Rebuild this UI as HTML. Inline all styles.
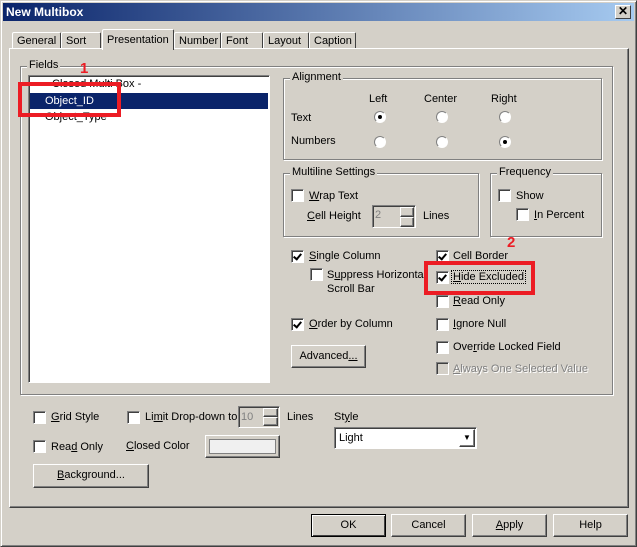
<!DOCTYPE html>
<html><head><style>
*{box-sizing:border-box;margin:0;padding:0}
body{width:637px;height:547px;background:#d4d0c8;font-family:"Liberation Sans",sans-serif;font-size:11px;color:#000;position:relative;overflow:hidden}
.a{position:absolute;white-space:nowrap}
.win{position:absolute;left:0;top:0;width:637px;height:547px;border:1px solid;border-color:#d4d0c8 #404040 #404040 #d4d0c8;box-shadow:inset 1px 1px #fff,inset -1px -1px #808080}
.title{position:absolute;left:3px;top:3px;width:631px;height:18px;background:linear-gradient(90deg,#0a246a,#a6caf0);color:#fff;font-weight:bold;font-size:12px;padding:2px 3px}
.close{position:absolute;left:615px;top:5px;width:16px;height:14px;background:#d4d0c8;border:1px solid;border-color:#fff #404040 #404040 #fff;font-size:12px;line-height:11px;text-align:center;font-weight:bold}
.tab{position:absolute;top:32px;height:17px;border:1px solid;border-color:#fff #404040 transparent #fff;border-bottom:none;padding:2px 4px;border-radius:2px 2px 0 0}
.panel{position:absolute;left:9px;top:48px;width:620px;height:460px;border:1px solid;border-color:#fff #404040 #404040 #fff;box-shadow:inset -1px -1px #808080}
.grp{position:absolute;border:1px solid #808080;box-shadow:1px 1px #fff,inset 1px 1px #fff}
.grp>span{position:absolute;top:-8px;left:6px;background:#d4d0c8;padding:0 2px}
.cb{position:absolute;width:13px;height:13px;background:#fff;border:1px solid;border-color:#808080 #fff #fff #808080;box-shadow:inset 1px 1px #404040}
.cb.k::after{content:"";position:absolute;left:3px;top:1px;width:3px;height:6px;border:solid #000;border-width:0 2px 2px 0;transform:rotate(40deg)}
.cb.d{background:#d4d0c8}
.cb.d::after{border-color:#808080}
.rb{position:absolute;width:12px;height:12px;border-radius:50%;background:#fff;border:1px solid;border-color:#808080 #fff #fff #808080}
.rb.on::after{content:"";position:absolute;left:3px;top:3px;width:4px;height:4px;border-radius:50%;background:#000}
.btn{position:absolute;border:1px solid;border-color:#fff #404040 #404040 #fff;box-shadow:inset -1px -1px #808080;text-align:center;line-height:20px}
.sunk{position:absolute;border:1px solid;border-color:#808080 #fff #fff #808080;box-shadow:inset 1px 1px #404040}
.red{position:absolute;border:4px solid #ec1c24}
.rn{position:absolute;color:#ec1c24;font-weight:bold;font-size:15px}
.gr{color:#808080}
u{text-decoration:underline}
</style></head><body>
<div class="win"></div>
<div class="title">New Multibox</div>
<div class="close">✕</div>

<div class="tab" style="left:12px;width:49px">General</div>
<div class="tab" style="left:61px;width:40px">Sort</div>
<div class="tab" style="left:174px;width:47px">Number</div>
<div class="tab" style="left:221px;width:42px">Font</div>
<div class="tab" style="left:263px;width:46px">Layout</div>
<div class="tab" style="left:309px;width:47px">Caption</div>
<div class="panel"></div>
<div class="tab" style="left:102px;top:29px;width:72px;height:21px;background:#d4d0c8;z-index:2;padding-top:4px">Presentation</div>

<div class="grp" style="left:20px;top:66px;width:593px;height:329px"><span>Fields</span></div>
<div class="sunk" style="left:28px;top:75px;width:242px;height:308px;background:#fff"></div>
<div class="a" style="left:52px;top:78px">Closed Multi Box -</div>
<div class="a" style="left:30px;top:93px;width:238px;height:16px;background:#0a246a"></div>
<div class="a" style="left:45px;top:95px;color:#fff">Object_ID</div>
<div class="a" style="left:45px;top:111px">Object_Type</div>

<div class="grp" style="left:283px;top:78px;width:319px;height:82px"><span>Alignment</span></div>
<div class="a" style="left:369px;top:93px">Left</div>
<div class="a" style="left:424px;top:93px">Center</div>
<div class="a" style="left:491px;top:93px">Right</div>
<div class="a" style="left:291px;top:112px">Text</div>
<div class="a" style="left:291px;top:135px">Numbers</div>
<div class="rb on" style="left:374px;top:111px"></div>
<div class="rb" style="left:436px;top:111px"></div>
<div class="rb" style="left:499px;top:111px"></div>
<div class="rb" style="left:374px;top:136px"></div>
<div class="rb" style="left:436px;top:136px"></div>
<div class="rb on" style="left:499px;top:136px"></div>

<div class="grp" style="left:283px;top:173px;width:196px;height:64px"><span>Multiline Settings</span></div>
<div class="cb" style="left:291px;top:189px"></div><div class="a" style="left:309px;top:190px"><u>W</u>rap Text</div>
<div class="a" style="left:307px;top:210px"><u>C</u>ell Height</div>
<div class="sunk" style="left:372px;top:205px;width:44px;height:23px"></div>
<div class="a gr" style="left:375px;top:209px">2</div>
<div class="btn" style="left:400px;top:207px;width:14px;height:10px"></div>
<div class="btn" style="left:400px;top:217px;width:14px;height:10px"></div>
<div class="a" style="left:423px;top:210px">Lines</div>

<div class="grp" style="left:490px;top:173px;width:112px;height:64px"><span>Frequency</span></div>
<div class="cb" style="left:498px;top:189px"></div><div class="a" style="left:516px;top:190px">Show</div>
<div class="cb" style="left:516px;top:208px"></div><div class="a" style="left:534px;top:209px"><u>I</u>n Percent</div>

<div class="cb k" style="left:291px;top:250px"></div><div class="a" style="left:309px;top:250px"><u>S</u>ingle Column</div>
<div class="cb" style="left:310px;top:268px"></div><div class="a" style="left:327px;top:268px;line-height:14px">S<u>u</u>ppress Horizontal<br>Scroll Bar</div>
<div class="cb k" style="left:291px;top:318px"></div><div class="a" style="left:309px;top:318px"><u>O</u>rder by Column</div>
<div class="btn" style="left:291px;top:345px;width:75px;height:23px">Advanced<u>...</u></div>

<div class="cb k" style="left:436px;top:250px"></div><div class="a" style="left:453px;top:250px">Cell Border</div>
<div class="cb k" style="left:436px;top:271px"></div><div class="a" style="left:451px;top:270px;border:1px dotted #000;padding:0 1px"><u>H</u>ide Excluded</div>
<div class="cb" style="left:436px;top:295px"></div><div class="a" style="left:453px;top:295px"><u>R</u>ead Only</div>
<div class="cb" style="left:436px;top:318px"></div><div class="a" style="left:453px;top:318px"><u>I</u>gnore Null</div>
<div class="cb" style="left:436px;top:341px"></div><div class="a" style="left:453px;top:341px">Ove<u>r</u>ride Locked Field</div>
<div class="cb d" style="left:436px;top:362px"></div><div class="a gr" style="left:453px;top:363px;text-shadow:1px 1px #fff"><u>A</u>lways One Selected Value</div>

<div class="red" style="left:18px;top:82px;width:103px;height:35px"></div>
<div class="rn" style="left:80px;top:60px">1</div>
<div class="red" style="left:424px;top:261px;width:111px;height:34px"></div>
<div class="rn" style="left:507px;top:234px">2</div>

<div class="cb" style="left:33px;top:411px"></div><div class="a" style="left:51px;top:411px"><u>G</u>rid Style</div>
<div class="cb" style="left:127px;top:411px"></div><div class="a" style="left:145px;top:411px">Li<u>m</u>it Drop-down to</div>
<div class="sunk" style="left:238px;top:406px;width:42px;height:22px"></div>
<div class="a gr" style="left:241px;top:411px">10</div>
<div class="btn" style="left:263px;top:408px;width:15px;height:9px"></div>
<div class="btn" style="left:263px;top:417px;width:15px;height:9px"></div>
<div class="a" style="left:287px;top:411px">Lines</div>
<div class="a" style="left:334px;top:411px">St<u>y</u>le</div>
<div class="sunk" style="left:334px;top:427px;width:143px;height:22px;background:#fff"></div>
<div class="a" style="left:339px;top:432px">Light</div>
<div class="btn" style="left:459px;top:429px;width:16px;height:18px;font-size:8px;line-height:16px">▼</div>
<div class="cb" style="left:33px;top:440px"></div><div class="a" style="left:51px;top:441px">Rea<u>d</u> Only</div>
<div class="a" style="left:126px;top:440px"><u>C</u>losed Color</div>
<div class="btn" style="left:205px;top:435px;width:75px;height:23px"></div>
<div class="a" style="left:209px;top:439px;width:67px;height:15px;border:1px solid #808080;background:#f0f0f0"></div>
<div class="btn" style="left:33px;top:464px;width:116px;height:24px"><u>B</u>ackground...</div>

<div class="btn" style="left:311px;top:514px;width:75px;height:23px;border:1px solid #000;box-shadow:inset 1px 1px #fff,inset -1px -1px #404040">OK</div>
<div class="btn" style="left:391px;top:514px;width:75px;height:23px">Cancel</div>
<div class="btn" style="left:472px;top:514px;width:75px;height:23px"><u>A</u>pply</div>
<div class="btn" style="left:553px;top:514px;width:75px;height:23px">Help</div>
</body></html>
